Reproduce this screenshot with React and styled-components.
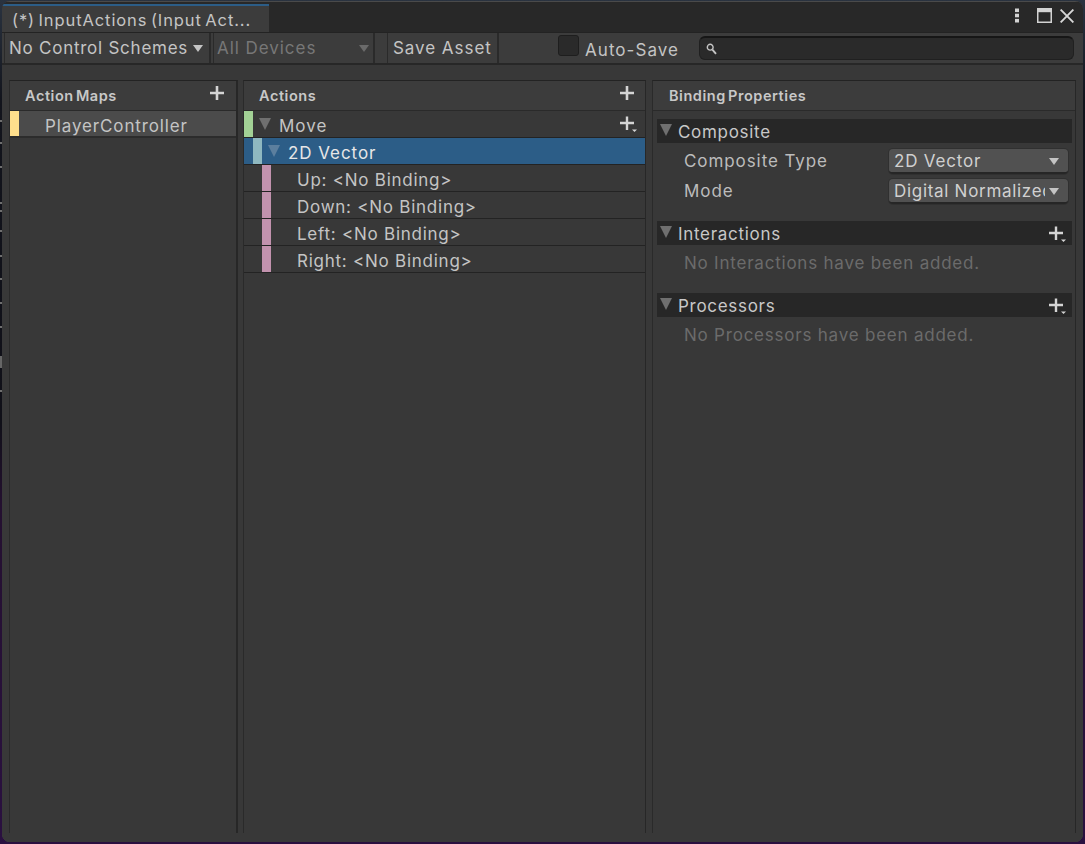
import React from "react";
import styled, { createGlobalStyle } from "styled-components";

const Global = createGlobalStyle`
  html, body { margin: 0; padding: 0; background: #14141c; }
  #root { width: 1085px; height: 844px; overflow: hidden; }
  * { box-sizing: border-box; }
`;

const Desktop = styled.div`
  position: relative; width: 1085px; height: 844px; padding: 1px 2px 2px 2px;
  background: linear-gradient(180deg, #2a3340 0, #12141c 12%, #101018 50%, #241030 60%, #2a1040 100%);
  font-family: Inter, "Noto Sans", "Liberation Sans", sans-serif;
`;
const Ticks = styled.svg`position: absolute; left: 0; top: 100px; width: 3px; height: 400px;`;
const Window = styled.div`
  height: 841px; display: flex; flex-direction: column; overflow: hidden;
  background: #383838; border-radius: 8px;
  box-shadow: inset 0 0 0 1px #454545;
`;
const TitleBar = styled.div`
  height: 31px; flex: none; display: flex; align-items: flex-end; justify-content: space-between;
  background: #282828; border-top: 1px solid #4a4a4a;
`;
const Tab = styled.div`
  width: 267px; height: 28px; padding: 1px 0 0 10px; display: flex; align-items: center;
  background: #3c3c3c; border-top: 2px solid #2c5d87;
  font-size: 16.5px; letter-spacing: .9px; word-spacing: -2px; color: #c4c4c4; white-space: nowrap;
`;
const WinControls = styled.div`display: flex; align-items: center; padding: 0 9px 3px 0; height: 30px; color: #d2d2d2;`;
const WinIcon = styled.span`display: flex; margin-left: ${p => p.$ml || 0}px;`;
const Toolbar = styled.div`
  height: 33px; flex: none; display: flex; align-items: stretch; padding-left: 2px;
  background: #3c3c3c; border-top: 1px solid #232323; border-bottom: 2px solid #272727;
`;
const ToolDrop = styled.div`
  width: ${p => p.$w}px; margin-right: ${p => p.$mr || 0}px; padding: 0 ${p => p.$pr || 6}px 0 ${p => p.$pl || 5}px;
  display: flex; align-items: center; justify-content: space-between;
  border-left: 1px solid #2a2a2a; border-right: 2px solid #2a2a2a;
  font-size: 17px; letter-spacing: ${p => p.$ls || .75}px; white-space: nowrap;
  color: ${p => p.$off ? "#777" : "#c4c4c4"}; background: #3c3c3c;
`;
const Caret = styled.span`
  width: 0; height: 0; flex: none; display: block;
  border-left: 5.5px solid transparent; border-right: 5.5px solid transparent;
  border-top: 7px solid ${p => p.$c || "#c4c4c4"};
`;
const AutoSave = styled.label`
  margin-left: 59px; width: 141px; display: flex; align-items: center; gap: 6px;
  font-size: 17px; letter-spacing: 1.05px; color: #c4c4c4;
`;
const Check = styled.span`
  width: 21px; height: 21px; margin-top: -5px; flex: none; background: #2a2a2a;
  border: 1px solid #1e1e1e; border-radius: 3px;
`;
const AutoLabel = styled.span`margin-top: 4px;`;
const Search = styled.div`
  width: 375px; height: 24px; margin-top: 3px; padding-left: 6px; display: flex; align-items: center;
  background: #2a2a2a; border: 1px solid #202020; border-top: 2px solid #161616; border-radius: 6px;
`;
const Panels = styled.div`
  flex: 1; min-height: 0; display: flex; padding: 15px 7px 9px 7px;
  background: #383838;
`;
const Panel = styled.section`
  width: ${p => p.$w}px; margin-right: ${p => p.$mr || 0}px; flex: none; display: flex; flex-direction: column;
  border-top: 1px solid #232323; border-left: 1px solid #2a2a2a;
  border-right: ${p => p.$rw || 1}px solid #272727;
`;
const PanelHead = styled.header`
  height: 30px; flex: none; padding: 0 ${p => p.$pr || 10}px 0 ${p => p.$pl || 15}px; display: flex; align-items: center; justify-content: space-between;
  background: #3c3c3c; border-bottom: 1px solid #2a2a2a;
  font-size: 14.5px; font-weight: 600; letter-spacing: .55px; word-spacing: -2px; color: #c8c8c8;
`;
const HeadPlus = styled.span`display: flex; margin-top: -5px;`;
const MapRow = styled.div`
  height: 27px; display: flex; align-items: center; background: #4b4b4b;
  border-bottom: 2px solid #2c2c2c; font-size: 17px; letter-spacing: .87px; color: #c4c4c4;
`;
const Swatch = styled.span`
  width: 9px; align-self: stretch; flex: none; background: ${p => p.$c};
  margin-left: ${p => p.$ml || 0}px;
`;
const Row = styled.div`
  height: 27px; display: flex; align-items: center; padding-right: 6px;
  font-size: 17px; letter-spacing: ${p => p.$ls || .75}px; color: ${p => p.$sel ? "#e6e6e6" : "#c4c4c4"};
  background: ${p => p.$sel ? "#2c5d87" : "#383838"};
  border-bottom: 1px solid #232323;
`;
const RowText = styled.span`margin-left: ${p => p.$ml}px; flex: 1; white-space: nowrap; padding-top: 4px;`;
const Fold = styled.span`
  width: 0; height: 0; flex: none; display: block; margin-left: ${p => p.$ml || 0}px; margin-top: ${p => p.$mt || 0}px;
  border-left: 6.5px solid transparent; border-right: 6.5px solid transparent;
  border-top: 12px solid ${p => p.$c || "#6f6f6f"};
`;
const Props = styled.div`padding: 8px 3px 0 4px; display: flex; flex-direction: column;`;
const SectionHead = styled.div`
  height: 24px; margin-top: ${p => p.$mt || 0}px; padding: 0 4px 0 3px; display: flex; align-items: center;
  background: #272727; font-size: 17px; letter-spacing: .7px; color: #c8c8c8;
`;
const SectionTitle = styled.span`margin-left: 6px; flex: 1; margin-top: 1px;`;
const SectionPlus = styled.span`display: flex; margin-top: 2px;`;
const FieldGroup = styled.div`padding-top: 3px;`;
const Field = styled.div`
  height: 30px; padding: 0 4px 0 27px; display: flex; align-items: center; justify-content: space-between;
  font-size: 17px; letter-spacing: .92px; color: #bcbcbc;
`;
const Select = styled.div`
  width: 179px; height: 25px; padding: 2px 9px 0 5px; display: flex; align-items: center; justify-content: space-between;
  background: #515151; border-radius: 4px; border-bottom: 2px solid #262626; box-shadow: 0 0 0 1px #303030;
  color: #d0d0d0; letter-spacing: .8px;
`;
const Clip = styled.span`width: 151px; overflow: hidden; white-space: nowrap; letter-spacing: .7px;`;
const Empty = styled.div`
  height: 30px; padding: 5px 0 0 27px; display: flex; align-items: center;
  font-size: 17px; letter-spacing: .78px; color: #6b6b6b;
`;

const Plus = ({ size = 16, small, color = "#d4d4d4" }) => (
  <svg width={small ? 20 : size} height={small ? 20 : size} viewBox={small ? "0 0 20 20" : "0 0 16 16"} fill="none">
    {small ? (
      <>
        <path d="M8 2.5v13.5M1 9h14" stroke={color} strokeWidth="2.4" />
        <path d="M13 15.5h5l-2.5 2.5z" fill={color} />
      </>
    ) : (
      <path d="M8 1v14M1 8h14" stroke={color} strokeWidth="2.6" />
    )}
  </svg>
);
const Dots = () => (
  <svg width="6" height="15" viewBox="0 0 6 15" fill="#d2d2d2">
    <rect x="1" y="0.5" width="4" height="3.6" /><rect x="1" y="5.7" width="4" height="3.6" /><rect x="1" y="10.9" width="4" height="3.6" />
  </svg>
);
const Maximize = () => (
  <svg width="15" height="15" viewBox="0 0 15 15" fill="none">
    <rect x=".75" y=".75" width="13.5" height="13.5" stroke="#d2d2d2" strokeWidth="1.5" />
    <rect x="1" y="1" width="13" height="3.2" fill="#d2d2d2" />
  </svg>
);
const Close = () => (
  <svg width="14" height="14" viewBox="0 0 14 14" fill="none">
    <path d="M.6.6l12.8 12.8M13.4.6L.6 13.4" stroke="#d8d8d8" strokeWidth="1.9" />
  </svg>
);
const Lens = () => (
  <svg width="11" height="12" viewBox="0 0 11 12" fill="none">
    <circle cx="4.2" cy="4.2" r="2.9" stroke="#c4c4c4" strokeWidth="1.4" />
    <path d="M6.4 6.6l3.6 4.2" stroke="#c4c4c4" strokeWidth="1.9" />
  </svg>
);

const bindings = ["Up: <No Binding>", "Down: <No Binding>", "Left: <No Binding>", "Right: <No Binding>"];

export default function App() {
  return (
    <Desktop>
      <Global />
      <Ticks viewBox="0 0 3 400">
        {[20, 42, 66, 102, 110, 130, 155, 178, 202, 226, 290].map(y => (
          <rect key={y} x="0" y={y} width="2" height="2" fill="#6f6f6f" />
        ))}
        <rect x="0" y="256" width="2" height="12" fill="#666" />
      </Ticks>
      <Window>
        <TitleBar>
          <Tab>(*) InputActions (Input Act...</Tab>
          <WinControls>
            <WinIcon><Dots /></WinIcon>
            <WinIcon $ml={17}><Maximize /></WinIcon>
            <WinIcon $ml={8}><Close /></WinIcon>
          </WinControls>
        </TitleBar>
        <Toolbar>
          <ToolDrop $w={207} $mr={2} $pl={4}>No Control Schemes<Caret /></ToolDrop>
          <ToolDrop $w={162} $mr={12} $pl={3} $pr={4} $ls={.95} $off>All Devices<Caret $c="#6a6a6a" /></ToolDrop>
          <ToolDrop $w={112} $ls={.95}>Save Asset</ToolDrop>
          <AutoSave><Check /><AutoLabel>Auto-Save</AutoLabel></AutoSave>
          <Search><Lens /></Search>
        </Toolbar>
        <Panels>
          <Panel $w={229} $mr={5} $rw={2}>
            <PanelHead $pr={11}>Action Maps<HeadPlus><Plus /></HeadPlus></PanelHead>
            <MapRow>
              <Swatch $c="#ffdf8c" />
              <RowText $ml={26}>PlayerController</RowText>
            </MapRow>
          </Panel>
          <Panel $w={403} $mr={6}>
            <PanelHead>Actions<HeadPlus><Plus /></HeadPlus></PanelHead>
            <Row $ls={1}>
              <Swatch $c="#a2d195" />
              <Fold $ml={6} />
              <RowText $ml={8}>Move</RowText>
              <Plus small />
            </Row>
            <Row $sel $ls={.95}>
              <Swatch $c="#8fb8c0" $ml={9} />
              <Fold $ml={6} $c="#5c7f9e" />
              <RowText $ml={8}>2D Vector</RowText>
            </Row>
            {bindings.map(b => (
              <Row key={b}>
                <Swatch $c="#c292ae" $ml={18} />
                <RowText $ml={26}>{b}</RowText>
              </Row>
            ))}
          </Panel>
          <Panel $w={424}>
            <PanelHead $pl={16}>Binding Properties</PanelHead>
            <Props>
              <SectionHead>
                <Fold $mt={-2} />
                <SectionTitle>Composite</SectionTitle>
              </SectionHead>
              <FieldGroup>
                <Field>Composite Type<Select>2D Vector<Caret /></Select></Field>
                <Field>Mode<Select><Clip>Digital Normalized</Clip><Caret /></Select></Field>
              </FieldGroup>
              <SectionHead $mt={15}>
                <Fold $mt={-2} />
                <SectionTitle>Interactions</SectionTitle>
                <SectionPlus><Plus small /></SectionPlus>
              </SectionHead>
              <Empty>No Interactions have been added.</Empty>
              <SectionHead $mt={18}>
                <Fold $mt={-2} />
                <SectionTitle>Processors</SectionTitle>
                <SectionPlus><Plus small /></SectionPlus>
              </SectionHead>
              <Empty>No Processors have been added.</Empty>
            </Props>
          </Panel>
        </Panels>
      </Window>
    </Desktop>
  );
}
